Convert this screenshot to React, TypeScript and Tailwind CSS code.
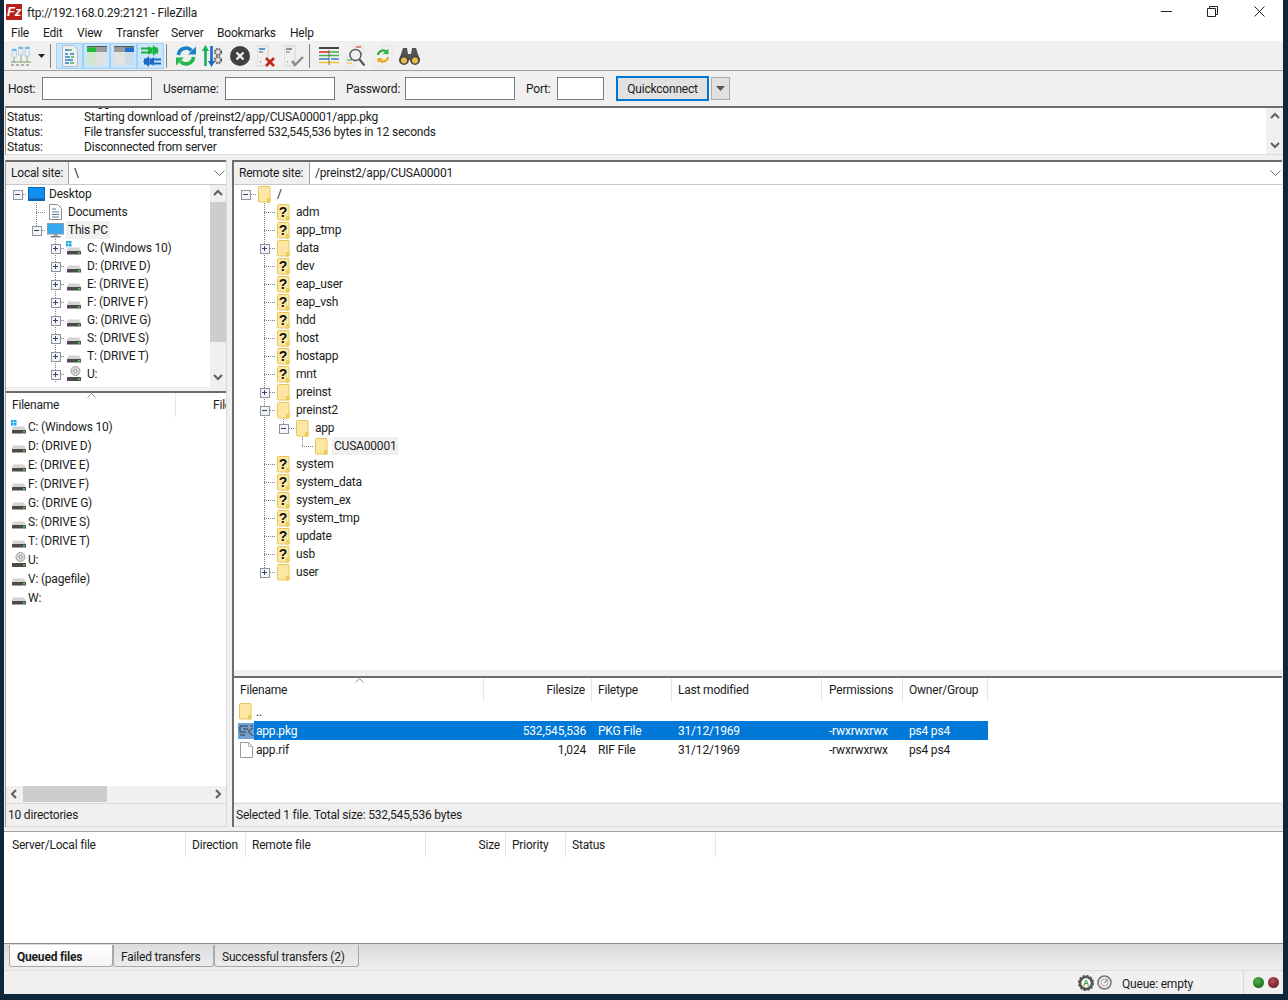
import type { ReactNode } from "react";

function Folder() {
  return (
    <svg width="13" height="17" viewBox="0 0 13 17" className="block">
      <rect x="0.5" y="0.5" width="11.5" height="15.5" rx="1" fill="#fce7a2" stroke="#e9c55f" />
      <rect x="9" y="12" width="3.5" height="4.5" fill="#f3c954" />
    </svg>
  );
}

function UnknownFolder() {
  return (
    <svg width="13" height="17" viewBox="0 0 13 17" className="block">
      <rect x="0.5" y="0.5" width="11.5" height="15.5" rx="1" fill="#fce7a2" stroke="#e9c55f" />
      <rect x="9" y="12" width="3.5" height="4.5" fill="#f3c954" />
      <text x="6" y="12.500" textAnchor="middle" fontSize="14" fontWeight="700" fontFamily="Liberation Sans" fill="#111">
        ?
      </text>
    </svg>
  );
}

function Drive({ win }: { win?: boolean }) {
  return (
    <svg width="16" height="16" viewBox="0 0 16 16" className="block">
      {win && (
        <g fill="#18a8f0">
          <rect x="0" y="1" width="2.5" height="2.5" />
          <rect x="3" y="1" width="2.5" height="2.5" />
          <rect x="0" y="4" width="2.5" height="2.5" />
          <rect x="3" y="4" width="2.5" height="2.5" />
        </g>
      )}
      <path d="M2 7.5h11l2 3.5H1z" fill="#d4d4d4" />
      <rect x="1" y="11" width="14" height="3.5" rx="0.5" fill="#4a4a4a" />
      <rect x="12" y="12" width="2" height="1.5" fill="#4fd04f" />
    </svg>
  );
}

function CdDrive() {
  return (
    <svg width="16" height="16" viewBox="0 0 16 16" className="block">
      <circle cx="9.5" cy="5" r="4.5" fill="#d8d8d8" stroke="#a0a0a0" />
      <circle cx="9.5" cy="5" r="1.5" fill="#fff" stroke="#909090" />
      <rect x="1" y="11" width="14" height="4" rx="0.5" fill="#4a4a4a" />
      <rect x="12" y="12.5" width="2" height="1.5" fill="#4fd04f" />
    </svg>
  );
}

function DesktopIcon() {
  return (
    <svg width="17" height="14" viewBox="0 0 17 14" className="block">
      <rect x="0.5" y="0.5" width="16" height="13" fill="#0f8ff0" stroke="#0a68b8" />
      <rect x="1" y="11.5" width="15" height="2" fill="#1160a8" />
    </svg>
  );
}

function PcIcon() {
  return (
    <svg width="17" height="15" viewBox="0 0 17 15" className="block">
      <rect x="0.5" y="0.5" width="16" height="10.5" fill="#35aaf2" stroke="#8a9aa8" />
      <rect x="6.5" y="11" width="4" height="2" fill="#9aa4ac" />
      <rect x="3.5" y="13" width="10" height="1.5" fill="#78848e" />
    </svg>
  );
}

function DocIcon() {
  return (
    <svg width="13" height="16" viewBox="0 0 13 16" className="block">
      <path d="M.5.5h8l4 4v11H.5z" fill="#fff" stroke="#8c8c8c" />
      <path d="M3 5h4M3 8h7M3 10.5h7M3 13h7" stroke="#5a7ea0" />
    </svg>
  );
}

function BlankFile() {
  return (
    <svg width="13" height="16" viewBox="0 0 13 16" className="block">
      <path d="M.5.5h8l4 4v11H.5z" fill="#fff" stroke="#9a9a9a" />
      <path d="M8.5.5v4h4" fill="none" stroke="#b5b5b5" />
    </svg>
  );
}

function PkgIcon() {
  return (
    <svg width="16" height="16" viewBox="0 0 16 16" className="block">
      <rect width="16" height="16" fill="#6fa3d4" />
      <path d="M2 3h8M2 3v6h6M2 12h5M12 3h3M10 8l5-3M10 8l5 5M5 6h5" fill="none" stroke="#4c5a68" strokeWidth="1.4" />
    </svg>
  );
}

type Row = {
  level: number;
  guides?: number[];
  exp?: "plus" | "minus";
  icon: ReactNode;
  label: string;
  hl?: boolean;
  last?: boolean;
};

// draws the dotted tree lines and the expander of one 18px row
function TreeRow({ row, base, gap = 12, slot = "w-[19px]" }: { row: Row; base: number; gap?: number; slot?: string }) {
  const cx = base + row.level * 19;
  const w = cx + gap;
  return (
    <div className="flex h-[18px] items-center whitespace-nowrap">
      <svg width={w} height="18" className="block shrink-0" shapeRendering="crispEdges">
        {(row.guides ?? []).map((g) => (
          <line key={g} x1={g + 0.5} x2={g + 0.5} y1="0" y2="18" stroke="#808080" strokeDasharray="1 1" />
        ))}
        {row.last && <line x1={cx + 0.5} x2={cx + 0.5} y1="0" y2="9" stroke="#808080" strokeDasharray="1 1" />}
        <line x1={cx} x2={w - 1} y1="9.5" y2="9.5" stroke="#808080" strokeDasharray="1 1" />
        {row.exp && (
          <g>
            <rect x={cx - 4} y="5" width="9" height="9" fill="#f4f4f6" stroke="#8c93a6" />
            <line x1={cx - 2} x2={cx + 3} y1="9.5" y2="9.5" stroke="#3a4468" />
            {row.exp === "plus" && <line x1={cx + 0.5} x2={cx + 0.5} y1="7" y2="12" stroke="#3a4468" />}
          </g>
        )}
      </svg>
      <span className={`flex shrink-0 items-center ${slot}`}>{row.icon}</span>
      <span className={row.hl ? "-ml-[2px] h-[18px] bg-[#f0f0f0] px-[2px] pt-[2px]" : "h-[18px] pt-[2px]"}>{row.label}</span>
    </div>
  );
}

const localTree: Row[] = [
  { level: 0, exp: "minus", icon: <DesktopIcon />, label: "Desktop" },
  { level: 1, guides: [30], icon: <span className="pl-[2px]"><DocIcon /></span>, label: "Documents" },
  { level: 1, exp: "minus", last: true, icon: <PcIcon />, label: "This PC", hl: true },
  { level: 2, guides: [49], exp: "plus", icon: <Drive win />, label: "C: (Windows 10)" },
  { level: 2, guides: [49], exp: "plus", icon: <Drive />, label: "D: (DRIVE D)" },
  { level: 2, guides: [49], exp: "plus", icon: <Drive />, label: "E: (DRIVE E)" },
  { level: 2, guides: [49], exp: "plus", icon: <Drive />, label: "F: (DRIVE F)" },
  { level: 2, guides: [49], exp: "plus", icon: <Drive />, label: "G: (DRIVE G)" },
  { level: 2, guides: [49], exp: "plus", icon: <Drive />, label: "S: (DRIVE S)" },
  { level: 2, guides: [49], exp: "plus", icon: <Drive />, label: "T: (DRIVE T)" },
  { level: 2, guides: [49], exp: "plus", icon: <CdDrive />, label: "U:" },
];

const g1 = [30];
const remoteTree: Row[] = [
  { level: 0, exp: "minus", icon: <Folder />, label: "/" },
  { level: 1, guides: g1, icon: <UnknownFolder />, label: "adm" },
  { level: 1, guides: g1, icon: <UnknownFolder />, label: "app_tmp" },
  { level: 1, guides: g1, exp: "plus", icon: <Folder />, label: "data" },
  { level: 1, guides: g1, icon: <UnknownFolder />, label: "dev" },
  { level: 1, guides: g1, icon: <UnknownFolder />, label: "eap_user" },
  { level: 1, guides: g1, icon: <UnknownFolder />, label: "eap_vsh" },
  { level: 1, guides: g1, icon: <UnknownFolder />, label: "hdd" },
  { level: 1, guides: g1, icon: <UnknownFolder />, label: "host" },
  { level: 1, guides: g1, icon: <UnknownFolder />, label: "hostapp" },
  { level: 1, guides: g1, icon: <UnknownFolder />, label: "mnt" },
  { level: 1, guides: g1, exp: "plus", icon: <Folder />, label: "preinst" },
  { level: 1, guides: g1, exp: "minus", icon: <Folder />, label: "preinst2" },
  { level: 2, guides: g1, exp: "minus", last: true, icon: <Folder />, label: "app" },
  { level: 3, guides: g1, last: true, icon: <Folder />, label: "CUSA00001", hl: true },
  { level: 1, guides: g1, icon: <UnknownFolder />, label: "system" },
  { level: 1, guides: g1, icon: <UnknownFolder />, label: "system_data" },
  { level: 1, guides: g1, icon: <UnknownFolder />, label: "system_ex" },
  { level: 1, guides: g1, icon: <UnknownFolder />, label: "system_tmp" },
  { level: 1, guides: g1, icon: <UnknownFolder />, label: "update" },
  { level: 1, guides: g1, icon: <UnknownFolder />, label: "usb" },
  { level: 1, last: true, exp: "plus", icon: <Folder />, label: "user" },
];

const localList: [ReactNode, string][] = [
  [<Drive win />, "C: (Windows 10)"],
  [<Drive />, "D: (DRIVE D)"],
  [<Drive />, "E: (DRIVE E)"],
  [<Drive />, "F: (DRIVE F)"],
  [<Drive />, "G: (DRIVE G)"],
  [<Drive />, "S: (DRIVE S)"],
  [<Drive />, "T: (DRIVE T)"],
  [<CdDrive />, "U:"],
  [<Drive />, "V: (pagefile)"],
  [<Drive />, "W:"],
];

function Arrow({ dir }: { dir: "up" | "down" | "left" | "right" }) {
  const d = {
    up: "M2 7l4-4 4 4",
    down: "M2 4l4 4 4-4",
    left: "M7 2L3 6l4 4",
    right: "M4 2l4 4-4 4",
  }[dir];
  return (
    <svg width="12" height="12" viewBox="0 0 12 12" className="block">
      <path d={d} fill="none" stroke="#606060" strokeWidth="2" />
    </svg>
  );
}

function Chevron() {
  return (
    <svg width="11" height="6" viewBox="0 0 11 6" className="block">
      <path d="M.5.5l5 5 5-5" fill="none" stroke="#707070" />
    </svg>
  );
}

function SortMark({ className }: { className: string }) {
  return (
    <svg width="9" height="5" viewBox="0 0 9 5" className={`absolute ${className}`}>
      <path d="M.5 4.5l4-4 4 4" fill="none" stroke="#909090" />
    </svg>
  );
}

function SiteBar({ label, labelW, path }: { label: string; labelW: string; path: string }) {
  return (
    <div className="flex h-[25px] shrink-0 border-t-2 border-b border-t-[#6d6d6d] border-b-[#c8c8c8] bg-white">
      <div className={`flex items-center whitespace-nowrap border-r border-[#a0a0a0] bg-[#f0f0f0] pl-[5px] pt-[1px] ${labelW}`}>{label}</div>
      <div className="flex flex-1 items-center justify-between pl-[5px] pr-px">
        <span className="pt-[1px]">{path}</span>
        <Chevron />
      </div>
    </div>
  );
}

function Col({ w, right, children }: { w: string; right?: boolean; children?: ReactNode }) {
  return (
    <div className={`flex h-[24px] shrink-0 items-center overflow-hidden whitespace-nowrap border-r border-[#e5e5e5] px-[6px] pt-[1px] ${w} ${right ? "justify-end" : ""}`}>
      {children}
    </div>
  );
}

function ToolBtn({ on, children }: { on?: boolean; children: ReactNode }) {
  return (
    <div className={`flex h-[26px] w-[27px] shrink-0 items-center justify-center ${on ? "border border-[#99d1ff] bg-[#cce4f7]" : ""}`}>
      {children}
    </div>
  );
}

function Sep({ ml = "" }: { ml?: string }) {
  return <div className={`h-[24px] w-px shrink-0 bg-[#808080] ${ml}`} />;
}

function Input({ w }: { w: string }) {
  return <div className={`h-[23px] shrink-0 border border-[#7a7a7a] bg-white ${w}`} />;
}

function SiteManagerIcon() {
  return (
    <svg width="22" height="22" viewBox="0 0 22 22">
      <g fill="#e8eef5" stroke="#b4c6d8" strokeWidth="0.7">
        <rect x="2" y="4" width="4.5" height="8" />
        <rect x="8.5" y="2" width="4.5" height="8" />
        <rect x="15" y="2" width="4.5" height="9" />
      </g>
      <g fill="#5cb8ee">
        <rect x="2.5" y="4" width="3.5" height="2" />
        <rect x="9" y="2" width="3.5" height="2" />
        <rect x="15.5" y="2" width="3.5" height="2" />
      </g>
      <path d="M4 12v5M11 10v7M17 11v6" stroke="#9cc48c" strokeWidth="1.3" />
      <path d="M1 17h20" stroke="#8aa878" strokeWidth="1.2" />
      <path d="M1 20h20" stroke="#777" strokeWidth="1.2" strokeDasharray="3 2" />
    </svg>
  );
}

function LogIcon() {
  return (
    <svg width="18" height="22" viewBox="0 0 18 22">
      <path d="M1.5.5h11l4 4v17h-15z" fill="#eef0f3" stroke="#b8bec6" />
      <path d="M4 5h4M4 9h3M9 9h4M4 12h5M4 15h8M4 18h4" stroke="#2f7fc4" strokeWidth="1.4" />
      <path d="M8 5h3M10 12h3M9 18h4" stroke="#47b04b" strokeWidth="1.4" />
    </svg>
  );
}

function LocalTreeIcon() {
  return (
    <svg width="20" height="19" viewBox="0 0 20 19">
      <rect width="20" height="19" fill="#e2e2e2" />
      <rect width="20" height="1.500" fill="#555" />
      <rect y="1.500" width="9" height="4.500" fill="#1fbf2f" />
      <rect x="9" y="1.500" width="11" height="4.500" fill="#9a9a9a" />
      <rect y="6" width="9" height="13" fill="#cfe6cf" />
    </svg>
  );
}

function RemoteTreeIcon() {
  return (
    <svg width="20" height="19" viewBox="0 0 20 19">
      <rect width="20" height="19" fill="#e2e2e2" />
      <rect width="20" height="1.500" fill="#555" />
      <rect y="1.500" width="11" height="4.500" fill="#9a9a9a" />
      <rect x="11" y="1.500" width="9" height="4.500" fill="#1a73d0" />
      <rect x="11" y="6" width="9" height="13" fill="#c9dcec" />
    </svg>
  );
}

function QueueIcon() {
  return (
    <svg width="22" height="22" viewBox="0 0 22 22">
      <path d="M1 7.5h17M1 3.5h17" stroke="#19b53c" strokeWidth="2" />
      <path d="M13 0l6 5.5-6 5.5zM8 1l5 4.5-5 4.5z" fill="#19b53c" />
      <path d="M4 14.5h17M4 18.5h17" stroke="#1a68c8" strokeWidth="2" />
      <path d="M9 11l-6 5.5 6 5.500zM14 12l-5 4.500 5 4.500z" fill="#1a68c8" />
    </svg>
  );
}

function RefreshIcon() {
  return (
    <svg width="22" height="22" viewBox="0 0 22 22">
      <path d="M3.5 10A7.5 7.5 0 0 1 16.5 5.5" fill="none" stroke="#1c7fc8" strokeWidth="3.6" />
      <path d="M21 1.5v8h-8z" fill="#1c7fc8" />
      <path d="M18.5 12A7.5 7.5 0 0 1 5.5 16.5" fill="none" stroke="#27b84a" strokeWidth="3.6" />
      <path d="M1 20.5v-8h8z" fill="#27b84a" />
    </svg>
  );
}

function ProcessIcon() {
  return (
    <svg width="21" height="22" viewBox="0 0 21 22">
      <path d="M3.5 21V5" stroke="#19b05a" strokeWidth="2.6" />
      <path d="M3.5 0L7 6H0z" fill="#19b05a" />
      <path d="M9.5 1v16" stroke="#1a68c8" strokeWidth="2.6" />
      <path d="M9.5 22L6 16h7z" fill="#1a68c8" />
      <circle cx="16" cy="7" r="3" fill="none" stroke="#666" strokeWidth="2.4" strokeDasharray="1.6 0.8" />
      <circle cx="16" cy="15" r="3" fill="none" stroke="#666" strokeWidth="2.4" strokeDasharray="1.6 0.8" />
    </svg>
  );
}

function CancelIcon() {
  return (
    <svg width="20" height="20" viewBox="0 0 20 20">
      <circle cx="10" cy="10" r="10" fill="#3f3f3f" />
      <path d="M6.5 6.5l7 7M13.5 6.5l-7 7" stroke="#eee" strokeWidth="2.4" />
    </svg>
  );
}

function DisconnectIcon() {
  return (
    <svg width="20" height="22" viewBox="0 0 20 22">
      <path d="M0 1h11v20H0z" fill="#f0f0f0" stroke="#d4d4d4" />
      <path d="M2 4h6" stroke="#2f7fc4" strokeWidth="1.6" />
      <path d="M2 7h4M3 17h1" stroke="#555" strokeWidth="1.2" />
      <path d="M9 13l8 8M17 13l-8 8" stroke="#c8261c" strokeWidth="2.6" />
    </svg>
  );
}

function ReconnectIcon() {
  return (
    <svg width="20" height="22" viewBox="0 0 20 22">
      <path d="M0 1h11v20H0z" fill="#f0f0f0" stroke="#d4d4d4" />
      <path d="M2 4h6" stroke="#777" strokeWidth="1.6" />
      <path d="M2 7h4M3 17h1" stroke="#777" strokeWidth="1.2" />
      <path d="M8 16l3 4 8-8" fill="none" stroke="#8a8a8a" strokeWidth="2.4" />
    </svg>
  );
}

function FilterIcon() {
  return (
    <svg width="20" height="18" viewBox="0 0 20 18">
      <rect width="20" height="18" fill="#f2f2f2" />
      <rect width="20" height="2" fill="#444" />
      <path d="M0 5h10" stroke="#d9342a" strokeWidth="1.6" />
      <path d="M10 5h10M0 8.5h20" stroke="#47b04b" strokeWidth="1.6" />
      <path d="M0 12h10M12 12h8" stroke="#2f7fc4" strokeWidth="1.6" />
      <path d="M0 15.5h20" stroke="#eec33a" strokeWidth="1.6" />
      <path d="M10 3v15" stroke="#555" strokeWidth="0.8" />
    </svg>
  );
}

function CompareIcon() {
  return (
    <svg width="20" height="22" viewBox="0 0 20 22">
      <path d="M8 0h9v8H8z" fill="#f4f4f4" stroke="#ddd" />
      <path d="M10 2h5" stroke="#d9342a" strokeWidth="1.2" />
      <path d="M0 12h8v9H0z" fill="#f4f4f4" stroke="#ddd" />
      <path d="M1 15h5" stroke="#47b04b" strokeWidth="1.2" />
      <path d="M1 18h5" stroke="#eec33a" strokeWidth="1.2" />
      <circle cx="9.5" cy="10" r="5.5" fill="#eef3f6" fillOpacity="0.7" stroke="#555" strokeWidth="1.4" />
      <path d="M13.5 14.5l5 6" stroke="#555" strokeWidth="2.2" />
    </svg>
  );
}

function SyncIcon() {
  return (
    <svg width="20" height="22" viewBox="0 0 20 22">
      <path d="M9 1h10v8H9z" fill="#f4f4f4" stroke="#e0e0e0" />
      <path d="M1 14h8v7H1z" fill="#f4f4f4" stroke="#e0e0e0" />
      <path d="M5 10a5 5 0 0 1 8-3.5" fill="none" stroke="#31b03a" strokeWidth="2.2" />
      <path d="M15.500 3.500v5.500h-5.500z" fill="#31b03a" />
      <path d="M15 12a5 5 0 0 1-8 3.500" fill="none" stroke="#f0a820" strokeWidth="2.200" />
      <path d="M4.500 18.500v-5.500h5.500z" fill="#f0a820" />
    </svg>
  );
}

function BinocularsIcon() {
  return (
    <svg width="21" height="20" viewBox="0 0 21 20">
      <path d="M4 2h4l1 6h3l1-6h4l4 12H0z" fill="#555" />
      <circle cx="5" cy="14" r="5" fill="#4a4a4a" />
      <circle cx="16" cy="14" r="5" fill="#4a4a4a" />
      <circle cx="5" cy="14.500" r="3" fill="#ecbc4a" />
      <circle cx="16" cy="14.500" r="3" fill="#ecbc4a" />
    </svg>
  );
}

function Gauge() {
  return (
    <svg width="15" height="15" viewBox="0 0 15 15">
      <circle cx="7.500" cy="7.500" r="6.500" fill="#eee" stroke="#777" strokeWidth="1.500" />
      <circle cx="7.500" cy="7.500" r="3.500" fill="none" stroke="#aaa" />
      <path d="M7.500 8l3-4" stroke="#666" />
    </svg>
  );
}

function GearA() {
  return (
    <svg width="16" height="16" viewBox="0 0 16 16">
      <circle cx="8" cy="8" r="6" fill="#fff" stroke="#555" strokeWidth="2.600" />
      <circle cx="8" cy="8" r="7.400" fill="none" stroke="#555" strokeWidth="1.400" strokeDasharray="2.200 1.700" />
      <text x="8" y="11" textAnchor="middle" fontSize="8.500" fontWeight="700" fontFamily="Liberation Sans" fill="#2c9e3a">
        A
      </text>
    </svg>
  );
}

const menus: [string, string][] = [
  ["File", "w-[32px]"],
  ["Edit", "w-[34px]"],
  ["View", "w-[39px]"],
  ["Transfer", "w-[55px]"],
  ["Server", "w-[46px]"],
  ["Bookmarks", "w-[73px]"],
  ["Help", "w-[40px]"],
];

function FileCells({ name, size, type }: { name: string; size: string; type: string }) {
  return (
    <>
      <span className="w-[230px] pl-[2px]">{name}</span>
      <span className="w-[102px] text-right">{size}</span>
      <span className="w-[86px] pl-[12px]">{type}</span>
      <span className="w-[150px] pl-[6px]">31/12/1969</span>
      <span className="w-[80px] pl-[7px]">-rwxrwxrwx</span>
      <span className="pl-[7px]">ps4 ps4</span>
    </>
  );
}

export default function App() {
  return (
    <div className="h-[1000px] w-full bg-[#10263a] pl-[4px] font-['Roboto',sans-serif] text-[12px] leading-[15px] tracking-[-0.2px] text-[#1c1c1c]">
      <div className="flex h-[994px] w-[1279px] flex-col overflow-hidden bg-[#f0f0f0]">
        {/* title bar */}
        <div className="flex h-[23px] shrink-0 items-center bg-white pl-[2px]">
          <div className="flex h-[16px] w-[16px] items-center justify-center bg-[#b5211a] font-['Liberation_Sans',sans-serif] text-[13px] font-bold italic text-white">
            Fz
          </div>
          <span className="ml-[5px] pt-[4px]">ftp://192.168.0.29:2121 - FileZilla</span>
          <div className="ml-auto flex items-center pr-[18px]">
            <svg width="11" height="2" className="mr-[35px]">
              <rect width="11" height="1" fill="#222" />
            </svg>
            <svg width="11" height="11" viewBox="0 0 11 11" className="mr-[36px]">
              <path d="M.5 2.500h8v8h-8zM2.500 2.500v-2h8v8h-2" fill="none" stroke="#222" />
            </svg>
            <svg width="11" height="11" viewBox="0 0 11 11">
              <path d="M.5.500l10 10M10.500.500l-10 10" stroke="#222" />
            </svg>
          </div>
        </div>
        {/* menu */}
        <div className="flex h-[18px] shrink-0 items-center bg-white pl-[7px] pt-[3px]">
          {menus.map(([m, w]) => (
            <span key={m} className={w}>
              {m}
            </span>
          ))}
        </div>
        {/* toolbar */}
        <div className="flex h-[30px] shrink-0 items-center border-b border-[#a0a0a0] pl-[3px]">
          <ToolBtn>
            <SiteManagerIcon />
          </ToolBtn>
          <svg width="7" height="4" viewBox="0 0 7 4" className="ml-[4px] mr-[5px]">
            <path d="M0 0h7L3.500 4z" fill="#222" />
          </svg>
          <Sep ml="mr-[5px]" />
          <ToolBtn on>
            <LogIcon />
          </ToolBtn>
          <ToolBtn on>
            <LocalTreeIcon />
          </ToolBtn>
          <ToolBtn on>
            <RemoteTreeIcon />
          </ToolBtn>
          <ToolBtn on>
            <QueueIcon />
          </ToolBtn>
          <Sep ml="ml-[2px] mr-[5px]" />
          <ToolBtn>
            <RefreshIcon />
          </ToolBtn>
          <ToolBtn>
            <ProcessIcon />
          </ToolBtn>
          <ToolBtn>
            <CancelIcon />
          </ToolBtn>
          <ToolBtn>
            <DisconnectIcon />
          </ToolBtn>
          <ToolBtn>
            <ReconnectIcon />
          </ToolBtn>
          <Sep ml="ml-[2px] mr-[5px]" />
          <ToolBtn>
            <FilterIcon />
          </ToolBtn>
          <ToolBtn>
            <CompareIcon />
          </ToolBtn>
          <ToolBtn>
            <SyncIcon />
          </ToolBtn>
          <ToolBtn>
            <BinocularsIcon />
          </ToolBtn>
        </div>
        {/* quickconnect */}
        <div className="flex h-[35px] shrink-0 items-center pl-[4px]">
          <span className="w-[34px] pt-[2px]">Host:</span>
          <Input w="w-[110px]" />
          <span className="ml-[11px] w-[62px] pt-[2px]">Username:</span>
          <Input w="w-[110px]" />
          <span className="ml-[11px] w-[59px] pt-[2px]">Password:</span>
          <Input w="w-[110px]" />
          <span className="ml-[11px] w-[31px] pt-[2px]">Port:</span>
          <Input w="w-[47px]" />
          <div className="ml-[12px] flex h-[25px] w-[93px] items-center justify-center border-2 border-[#0078d7] bg-[#e1e1e1] pt-[2px]">
            Quickconnect
          </div>
          <div className="ml-[2px] flex h-[23px] w-[19px] items-center justify-center border border-[#adadad] bg-[#e1e1e1]">
            <svg width="9" height="5" viewBox="0 0 9 5">
              <path d="M0 0h9L4.500 5z" fill="#555" />
            </svg>
          </div>
        </div>
        {/* message log */}
        <div className="ml-px flex h-[49px] shrink-0 overflow-hidden border-t-2 border-b border-l border-t-[#6d6d6d] border-b-[#dcdcdc] border-l-[#9a9a9a] bg-white">
          <div className="-mt-[13px] flex-1 pl-[1px]">
            {[
              ["Status:", "Logged in"],
              ["Status:", "Starting download of /preinst2/app/CUSA00001/app.pkg"],
              ["Status:", "File transfer successful, transferred 532,545,536 bytes in 12 seconds"],
              ["Status:", "Disconnected from server"],
            ].map(([a, b]) => (
              <div key={b} className="flex h-[15px] whitespace-nowrap">
                <span className="w-[77px]">{a}</span>
                <span>{b}</span>
              </div>
            ))}
          </div>
          <div className="flex w-[17px] flex-col items-center justify-between bg-[#f0f0f0] py-[3px]">
            <Arrow dir="up" />
            <Arrow dir="down" />
          </div>
        </div>
        <div className="h-[5px] shrink-0" />
        {/* panes */}
        <div className="flex h-[667px] shrink-0">
          <div className="ml-px flex w-[222px] shrink-0 flex-col border-x border-l-[#9a9a9a] border-r-[#d9d9d9]">
            <SiteBar label="Local site:" labelW="w-[63px]" path="\" />
            <div className="flex h-[202px] shrink-0 bg-white">
              <div className="flex-1 overflow-hidden">
                {localTree.map((r) => (
                  <TreeRow key={r.label} row={r} base={11} gap={11} slot="w-[21px]" />
                ))}
              </div>
              <div className="flex w-[16px] flex-col items-center bg-[#f0f0f0]">
                <div className="flex h-[17px] items-center">
                  <Arrow dir="up" />
                </div>
                <div className="h-[140px] w-full bg-[#cdcdcd]" />
                <div className="mb-[2px] mt-auto flex h-[17px] items-center">
                  <Arrow dir="down" />
                </div>
              </div>
            </div>
            <div className="h-[4px] shrink-0" />
            <div className="relative flex h-[411px] shrink-0 flex-col border-t-2 border-[#6d6d6d] bg-white">
              <SortMark className="left-[81px] top-[0px]" />
              <div className="flex shrink-0 overflow-hidden">
                <Col w="w-[170px]">Filename</Col>
                <div className="flex h-[24px] flex-1 items-center overflow-hidden whitespace-nowrap pl-[37px] pt-[1px]">Filesize</div>
              </div>
              <div className="flex-1">
                {localList.map(([icon, name]) => (
                  <div key={name} className="flex h-[19px] items-center pl-[5px]">
                    <span className="w-[17px]">{icon}</span>
                    <span className="pt-[2px]">{name}</span>
                  </div>
                ))}
              </div>
              <div className="flex h-[16px] shrink-0 items-center bg-[#f0f0f0]">
                <div className="flex w-[17px] justify-center">
                  <Arrow dir="left" />
                </div>
                <div className="h-full w-[84px] bg-[#cdcdcd]" />
                <div className="ml-auto flex w-[17px] justify-center">
                  <Arrow dir="right" />
                </div>
              </div>
            </div>
            <div className="mt-px flex h-[24px] shrink-0 items-center border-y border-[#d9d9d9] pl-[2px] pt-[1px]">10 directories</div>
          </div>
          <div className="ml-[5px] flex w-[1050px] shrink-0 flex-col border-l-2 border-[#6d6d6d]">
            <SiteBar label="Remote site:" labelW="w-[76px]" path="/preinst2/app/CUSA00001" />
            <div className="h-[485px] shrink-0 overflow-hidden bg-white">
              {remoteTree.map((r) => (
                <TreeRow key={r.label} row={r} base={11} gap={13} />
              ))}
            </div>
            <div className="h-[6px] shrink-0" />
            <div className="relative flex h-[126px] shrink-0 flex-col border-t-2 border-[#6d6d6d] bg-white">
              <SortMark className="left-[121px] top-[0px]" />
              <div className="flex shrink-0">
                <Col w="w-[250px]">Filename</Col>
                <Col w="w-[108px]" right>
                  Filesize
                </Col>
                <Col w="w-[80px]">Filetype</Col>
                <Col w="w-[150px]">Last modified</Col>
                <Col w="w-[81px]">
                  <span className="ml-px">Permissions</span>
                </Col>
                <Col w="w-[85px]">Owner/Group</Col>
              </div>
              <div className="flex h-[19px] items-center pl-[5px]">
                <span className="w-[17px]">
                  <Folder />
                </span>
                <span className="pt-[2px]">..</span>
              </div>
              <div className="flex h-[19px] w-[754px] items-center pl-[4px]">
                <span className="w-[16px]">
                  <PkgIcon />
                </span>
                <div className="flex h-full flex-1 items-center bg-[#0078d7] pt-[2px] text-white">
                  <FileCells name="app.pkg" size="532,545,536" type="PKG File" />
                </div>
              </div>
              <div className="flex h-[19px] w-[754px] items-center pl-[6px]">
                <span className="w-[14px]">
                  <BlankFile />
                </span>
                <div className="flex h-full flex-1 items-center pt-[2px]">
                  <FileCells name="app.rif" size="1,024" type="RIF File" />
                </div>
              </div>
            </div>
            <div className="mt-px flex h-[24px] shrink-0 items-center border-y border-[#d9d9d9] pl-[2px] pt-[1px]">
              Selected 1 file. Total size: 532,545,536 bytes
            </div>
          </div>
        </div>
        <div className="h-[4px] shrink-0" />
        {/* transfer queue */}
        <div className="flex h-[113px] shrink-0 flex-col border-y border-t-[#a0a0a0] border-b-[#8c8c8c] bg-white pt-[1px]">
          <div className="flex">
            <Col w="w-[182px] pl-[8px]">Server/Local file</Col>
            <Col w="w-[60px]">Direction</Col>
            <Col w="w-[180px]">Remote file</Col>
            <Col w="w-[80px]" right>
              <span className="-mr-px">Size</span>
            </Col>
            <Col w="w-[60px]">Priority</Col>
            <Col w="w-[150px]">Status</Col>
          </div>
        </div>
        {/* tabs */}
        <div className="flex h-[27px] shrink-0 items-start border-b border-[#dcdcdc] bg-gradient-to-b from-[#dadada] to-[#efefef] pl-[5px] pt-[1px]">
          <div className="flex h-[22px] w-[104px] items-center rounded-b-[3px] border border-t-0 border-[#a8a8a8] bg-gradient-to-b from-[#ffffff] to-[#f4f4f4] pl-[7px] pt-[3px] font-bold">
            Queued files
          </div>
          <div className="flex h-[22px] w-[101px] items-center rounded-b-[3px] border border-t-0 border-[#a8a8a8] bg-gradient-to-b from-[#dedede] to-[#ececec] pl-[7px] pt-[3px]">
            Failed transfers
          </div>
          <div className="flex h-[22px] w-[145px] items-center rounded-b-[3px] border border-t-0 border-[#a8a8a8] bg-gradient-to-b from-[#dedede] to-[#ececec] pl-[7px] pt-[3px]">
            Successful transfers (2)
          </div>
        </div>
        {/* status bar */}
        <div className="flex h-[23px] shrink-0 items-center">
          <div className="ml-auto flex h-full items-center">
            <GearA />
            <span className="ml-[3px]">
              <Gauge />
            </span>
            <span className="ml-[10px] w-[121px] pt-[4px]">Queue: empty</span>
          </div>
          <div className="flex h-full items-center gap-[4px] border-l border-[#d9d9d9] pl-[9px] pr-[4px]">
            <div className="h-[11px] w-[11px] rounded-full bg-[radial-gradient(circle_at_40%_35%,#4cb04c,#0d5c10)]" />
            <div className="h-[11px] w-[11px] rounded-full bg-[radial-gradient(circle_at_40%_35%,#b84c5c,#5e0d1a)]" />
          </div>
        </div>
      </div>
    </div>
  );
}
